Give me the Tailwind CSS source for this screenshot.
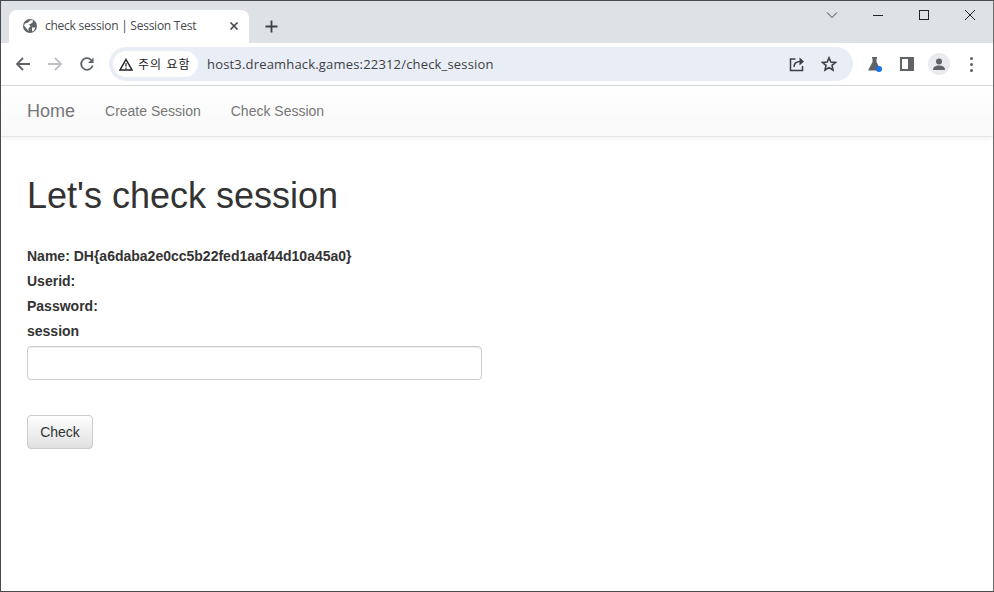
<!DOCTYPE html>
<html lang="en">
<head>
    <meta charset="UTF-8">
    <title>check session | Session Test</title>
    <script src="https://cdn.jsdelivr.net/npm/@tailwindcss/browser@4"></script>
</head>
<body class="bg-white overflow-hidden">
<div class="w-[994px] h-[592px] flex flex-col overflow-hidden border border-[#4a4a4a] border-r-[#6b6b6b] font-['Liberation_Sans',Arial,sans-serif] text-[#333]">

    <!-- Tab strip -->
    <div class="h-[42px] shrink-0 bg-[#dee1e6] flex items-end relative">
        <div class="ml-[8px] w-[240px] h-[33px] bg-white rounded-t-[8px] flex items-center pl-[13px] pr-[10px] pb-[1px]">
            <svg class="w-[16px] h-[16px] shrink-0" viewBox="0 0 16 16"><circle cx="8" cy="8" r="7" fill="#5f6368"/><path d="M3 5.500 6 4.500 8 2.500 10.500 2 11 4 8.500 6 7 6 8.500 8.500 6.500 10 6.500 13 4.500 10.500 2 7.500Z" fill="#fff"/><path d="M10 9.500 13.500 9.500 12 12.500 10 13.500Z" fill="#fff"/></svg>
            <span class="ml-[7px] flex-1 text-[12px] text-[#45494e] whitespace-nowrap font-['Open_Sans','Liberation_Sans',sans-serif] tracking-[-0.25px]">check session | Session Test</span>
            <svg class="w-[10px] h-[10px] shrink-0" viewBox="0 0 10 10"><path d="M1.500 1.500 8.500 8.500M8.500 1.500 1.500 8.500" stroke="#45494e" stroke-width="1.700"/></svg>
        </div>
        <svg class="ml-[16px] mb-[10px] w-[13px] h-[13px]" viewBox="0 0 13 13"><path d="M6.500 .5V12.500M.5 6.500H12.500" stroke="#3c4043" stroke-width="1.800"/></svg>
        <!-- Window controls -->
        <div class="absolute top-[8px] left-[825px] flex items-center">
            <svg class="w-[12px] h-[12px]" viewBox="0 0 12 12"><path d="M1 3.500 6 8.500 11 3.500" fill="none" stroke="#3c4043" stroke-width="1"/></svg>
            <svg class="ml-[34px] w-[12px] h-[12px]" viewBox="0 0 12 12"><path d="M1 6.500H11" stroke="#222" stroke-width="1"/></svg>
            <svg class="ml-[34px] w-[12px] h-[12px]" viewBox="0 0 12 12"><rect x="1.500" y="1.500" width="9" height="9" fill="none" stroke="#222" stroke-width="1"/></svg>
            <svg class="ml-[34px] w-[12px] h-[12px]" viewBox="0 0 12 12"><path d="M1 1 11 11M11 1 1 11" stroke="#222" stroke-width="1"/></svg>
        </div>
    </div>

    <!-- Toolbar -->
    <div class="h-[43px] shrink-0 bg-white border-b border-[#dadce0] flex items-center">
        <svg class="ml-[14px] w-[16px] h-[16px]" viewBox="0 0 16 16"><path d="M15 8H2M8 2 2 8 8 14" fill="none" stroke="#5f6368" stroke-width="1.800"/></svg>
        <svg class="ml-[16px] w-[16px] h-[16px]" viewBox="0 0 16 16"><path d="M1 8H14M8 2 14 8 8 14" fill="none" stroke="#bdc1c6" stroke-width="1.800"/></svg>
        <svg class="ml-[16px] w-[16px] h-[16px]" viewBox="0 0 16 16"><path d="M13.600 9.500A5.800 5.800 0 1 1 12.200 4" fill="none" stroke="#5f6368" stroke-width="1.800"/><path d="M14.500 1.500V7H9Z" fill="#5f6368"/></svg>
        <!-- Omnibox -->
        <div class="ml-[14px] w-[744px] h-[34px] rounded-full bg-[#e9edf6] flex items-center pl-[4px] pr-[16px]">
            <div class="h-[26px] w-[85px] shrink-0 rounded-full bg-white flex items-center pl-[5px]">
                <svg class="ml-[1px] w-[14px] h-[13px] shrink-0" viewBox="0 0 14 13"><path d="M7 1.500 13 12H1Z" fill="none" stroke="#222" stroke-width="1.500"/><path d="M7 5V8.500M7 9.500V11" stroke="#222" stroke-width="1.200"/></svg>
                <span class="ml-[5px] text-[12px] text-[#222] whitespace-nowrap font-['Noto_Sans_CJK_KR',sans-serif] tracking-[0.9px] [word-spacing:1px]">주의 요함</span>
            </div>
            <span class="ml-[9px] pt-[2px] flex-1 text-[13px] text-[#3c4043] whitespace-nowrap font-['Open_Sans','Liberation_Sans',sans-serif] tracking-[0.18px]">host3.dreamhack.games:22312/check_session</span>
            <svg class="w-[16px] h-[16px] shrink-0" viewBox="0 0 16 16"><path d="M6.500 3H1.500V14.500H13.500V10" fill="none" stroke="#3c4043" stroke-width="1.500"/><path d="M5 11C5 7 8 5.500 11.500 5.500" fill="none" stroke="#3c4043" stroke-width="1.500"/><path d="M10.500 1.500 15 5.500 10.500 9.500Z" fill="#3c4043"/></svg>
            <svg class="ml-[16px] w-[16px] h-[16px] shrink-0" viewBox="0 0 16 16"><path d="M8 1.800 9.800 6 14.500 6.400 11 9.400 12 14 8 11.600 4 14 5 9.400 1.500 6.400 6.200 6Z" fill="none" stroke="#3c4043" stroke-width="1.600"/></svg>
        </div>
        <!-- Extensions -->
        <svg class="ml-[14px] w-[16px] h-[16px]" viewBox="0 0 16 16"><path d="M5 1H10V2.500H9.500V6L14 14.500H1L5.500 6V2.500H5Z" fill="#5f6368"/><circle cx="12" cy="13" r="3" fill="#1a73e8"/></svg>
        <div class="ml-[17px] w-[14px] h-[14px] border-[2px] border-r-[6px] border-[#5f6368] bg-white"></div>
        <div class="ml-[14px] w-[22px] h-[22px] rounded-full bg-[#e8eaed] flex items-center justify-center">
            <svg class="w-[14px] h-[14px]" viewBox="0 0 14 14"><circle cx="7" cy="4.500" r="3" fill="#5f6368"/><path d="M1 13C1 9.500 4 8.500 7 8.500S13 9.500 13 13Z" fill="#5f6368"/></svg>
        </div>
        <div class="ml-[20px] flex flex-col gap-[3px]">
            <div class="w-[3px] h-[3px] rounded-full bg-[#5f6368]"></div>
            <div class="w-[3px] h-[3px] rounded-full bg-[#5f6368]"></div>
            <div class="w-[3px] h-[3px] rounded-full bg-[#5f6368]"></div>
        </div>
    </div>

    <!-- Navbar -->
    <nav class="h-[51px] shrink-0 bg-gradient-to-b from-white to-[#f8f8f8] border-b border-[#e7e7e7] shadow-[0_1px_5px_rgba(0,0,0,0.07)] flex items-center pl-[26px] text-[#777]">
        <a class="text-[18px]">Home</a>
        <a class="ml-[30px] text-[14px]">Create Session</a>
        <a class="ml-[30px] text-[14px]">Check Session</a>
    </nav>

    <!-- Content -->
    <main class="pl-[26px] flex-1">
        <h1 class="mt-[37px] text-[36px] leading-[44px] font-normal">Let's check session</h1>
        <div class="mt-[28px] flex flex-col gap-[5px] text-[14px] leading-[20px] font-bold">
            <p>Name: DH{a6daba2e0cc5b22fed1aaf44d10a45a0}</p>
            <p>Userid:</p>
            <p>Password:</p>
            <label>session</label>
        </div>
        <input type="text" class="block mt-[5px] w-[455px] h-[34px] bg-white border border-[#ccc] rounded-[4px] shadow-[inset_0_1px_1px_rgba(0,0,0,0.075)]">
        <button class="block mt-[35px] w-[66px] h-[34px] text-[14px] text-[#333] border border-[#ccc] rounded-[4px] bg-gradient-to-b from-white to-[#e0e0e0]">Check</button>
    </main>
</div>
</body>
</html>
